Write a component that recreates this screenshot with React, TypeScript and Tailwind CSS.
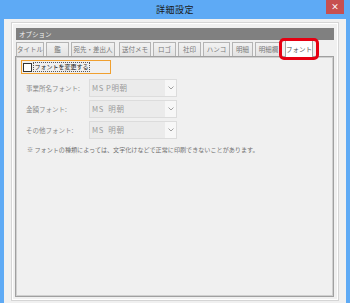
import React from "react";

const tabs = [
    { label: "タイトル", className: "w-[28px] ml-0" },
    { label: "鑑", className: "w-[23px] ml-[2px]" },
    { label: "宛先・差出人", className: "w-[44px] ml-[2px]" },
    { label: "送付メモ", className: "w-[32px] ml-[4px]" },
    { label: "ロゴ", className: "w-[23px] ml-[2px]" },
    { label: "社印", className: "w-[23px] ml-[2px]" },
    { label: "ハンコ", className: "w-[27px] ml-[2px]" },
    { label: "明細", className: "w-[21px] ml-[2px]" },
    { label: "明細欄", className: "w-[27px] ml-[2px]" },
];

const fontRows = [
    { label: "事業所名フォント:", value: "MS P明朝" },
    { label: "金額フォント:", value: "MS  明朝" },
    { label: "その他フォント:", value: "MS  明朝" },
];

const Chevron = () => (
    <svg width="6" height="4" viewBox="0 0 6 4" fill="none">
        <path d="M0.5 0.5 L3 3 L5.5 0.5" stroke="#a0a0a0" strokeWidth="1" />
    </svg>
);

export default function App() {
    return (
        <div className="w-[350px] h-[303px] bg-[#5eaaf5] overflow-hidden font-['Noto_Sans_CJK_JP',sans-serif]">
            {/* title bar */}
            <div className="relative h-[19px] flex items-center justify-center">
                <span className="text-[9px] leading-none text-[#1a1a1a] tracking-[0.5px]">詳細設定</span>
                <div className="absolute right-[6px] top-0 w-[18px] h-[14px] bg-[#c75050] flex items-center justify-center">
                    <span className="text-white text-[8px] leading-none font-bold">×</span>
                </div>
            </div>

            {/* window body */}
            <div className="mx-[4px] h-[284px] bg-[#f0f0f0] pt-[3px] px-[7px]">
                <div className="h-[279px] border border-[#d5d5d5]">
                    <div className="h-full border border-white pt-[4px] pl-[2px] pr-[3px]">
                        <div className="ml-[1px] h-[12px] bg-[#808080] flex items-center pl-[3px]">
                            <span className="text-[6.5px] leading-none text-[#f2f2f2]">オプション</span>
                        </div>

                        {/* tabs */}
                        <div className="mt-[2px] h-[14px] flex items-start pl-[1px]">
                            {tabs.map(tab => (
                                <div
                                    key={tab.label}
                                    className={`${tab.className} h-[14px] border border-[#b4b4b4] border-b-0 bg-gradient-to-b from-[#f2f2f2] to-[#e3e3e3] flex items-center justify-center`}>
                                    <span className="text-[6.5px] leading-none text-[#7a7a7a] whitespace-nowrap">{tab.label}</span>
                                </div>
                            ))}
                            <div className="relative ml-[3px] -mt-[2px] w-[28px] h-[17px] z-10">
                                <div className="w-full h-full border border-[#a8a8a8] border-b-0 bg-white flex items-center justify-center">
                                    <span className="text-[6.5px] leading-none text-[#555] whitespace-nowrap">フォント</span>
                                </div>
                                <div className="absolute -left-[6px] -top-[2px] w-[40px] h-[22px] border-[3px] border-[#e60012] rounded-[5px]" />
                            </div>
                        </div>

                        {/* content panel */}
                        <div className="h-[241px] border border-[#a0a0a0]">
                            <div className="h-full border border-[#d0d0d0] bg-[#f0f0f0] pt-[2px] pl-[4px]">
                                <div className="w-[90px] h-[14px] border border-[#f0a030] flex items-center pl-[1px]">
                                    <div className="w-[9px] h-[9px] border border-[#333] bg-white" />
                                    <span className="ml-[1px] text-[6px] leading-[8px] text-[#222] border border-dotted border-[#555] px-[0.5px]">フォントを変更する</span>
                                </div>

                                <div className="mt-[5px] flex flex-col gap-[3px]">
                                    {fontRows.map(row => (
                                        <div key={row.label} className="flex items-center h-[18px]">
                                            <span className="w-[68px] pl-[5px] text-[6.5px] leading-none text-[#8a8a8a] whitespace-nowrap">{row.label}</span>
                                            <div className="w-[88px] h-[18px] border border-[#dcdcdc] bg-[#ebebeb] flex items-stretch">
                                                <span className="flex-1 flex items-center pl-[2px] text-[7.5px] tracking-[0.6px] leading-none text-[#9a9a9a] whitespace-pre">{row.value}</span>
                                                <span className="w-[11px] bg-[#f7f7f7] flex items-center justify-center">
                                                    <Chevron />
                                                </span>
                                            </div>
                                        </div>
                                    ))}
                                </div>

                                <p className="mt-[8px] pl-[6px] text-[6.1px] leading-none text-[#707070] whitespace-nowrap">
                                    ※ フォントの種類によっては、文字化けなどで正常に印刷できないことがあります。
                                </p>
                            </div>
                        </div>
                    </div>
                </div>
            </div>
        </div>
    );
}
